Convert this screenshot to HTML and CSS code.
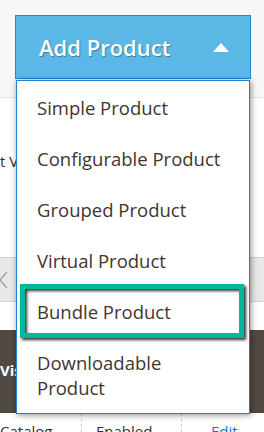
FILE: index.html
```html
<!DOCTYPE html>
<html>
<head>
<meta charset="utf-8">
<link rel="stylesheet" href="styles.css">
</head>
<body>
<div class="page">
  <div class="top-area"></div>
  <div class="label-row"><span class="label-text">t Visibility</span></div>
  <div class="pager-row">
    <svg class="chev" width="10" height="20" viewBox="0 0 10 20"><polyline points="8,2 1,10 8,18" fill="none" stroke="#a8a8a8" stroke-width="1.6"/></svg>
  </div>
  <div class="spacer-row"></div>
  <div class="head-row"><span class="head-text">Visibility</span></div>
  <div class="data-row">
    <div class="cell c1">Catalog</div>
    <div class="cell c2">Enabled</div>
    <div class="cell c3"><span class="edit">Edit</span></div>
  </div>
</div>

<div class="actions">
  <button class="add-btn"><span class="add-label">Add Product</span><span class="tri"></span></button>
  <ul class="menu">
    <li class="item">Simple Product</li>
    <li class="item">Configurable Product</li>
    <li class="item">Grouped Product</li>
    <li class="item">Virtual Product</li>
    <li class="item selected">Bundle Product<span class="highlight"></span></li>
    <li class="item">Downloadable Product</li>
  </ul>
</div>
</body>
</html>
```
FILE: styles.css
```css
* { box-sizing: border-box; }
html, body { margin: 0; padding: 0; }
body {
  width: 264px;
  height: 432px;
  overflow: hidden;
  font-family: "Open Sans", "DejaVu Sans", sans-serif;
  background: #ffffff;
  position: relative;
}
.page { display: flex; flex-direction: column; width: 264px; }
.top-area { height: 98px; background: #f8f8f8; border-bottom: 1px solid #e3e3e3; }
.label-row { height: 159px; background: #fff; padding-top: 53px; }
.label-text { font-size: 15px; color: #303030; white-space: nowrap; line-height: 20px; display: block; }
.pager-row { height: 45px; background: #e8e8e8; border-top: 1px solid #cfcfcf; border-bottom: 1px solid #cfcfcf; display: flex; align-items: center; }
.chev { display: block; margin-left: -1px; }
.spacer-row { height: 28px; background: #fff; }
.head-row { height: 83px; background: #514943; padding-top: 30px; }
.head-text { color: #fff; font-weight: 700; font-size: 15px; line-height: 20px; display: block; white-space: nowrap; }
.data-row { height: 19px; display: flex; background: #fff; }
.cell { font-size: 15px; color: #303030; padding-top: 8px; line-height: 20px; white-space: nowrap; }
.c1 { width: 82px; border-right: 1px dashed #d0d0d0; }
.c2 { width: 100px; border-right: 1px dashed #d0d0d0; padding-left: 14px; }
.c3 { padding-left: 29px; }
.edit { color: #007bdb; }

.actions { position: absolute; left: 15px; top: 15px; width: 236px; }
.add-btn {
  display: flex; align-items: center; justify-content: space-between;
  width: 236px; height: 64px; margin: 0;
  background: #5bb8e6; border: 1px solid #2487d8;
  padding: 0 21px 0 23px;
  font-family: "Open Sans", sans-serif; font-weight: 600; font-size: 22px;
  color: #fff; text-shadow: 1px 1px 1px rgba(0,0,0,.35);
}
.add-label { line-height: 30px; }
.tri {
  width: 0; height: 0;
  border-left: 8px solid transparent; border-right: 8px solid transparent;
  border-bottom: 9px solid #fff;
  margin-top: 1px;
}
.menu {
  list-style: none; margin: 1px 0 0 1px; padding: 1px 0 0 0;
  width: 234px;
  background: #fff;
  border: 1px solid #1f7fd0;
  box-shadow: 1px 1px 6px rgba(0,0,0,.45);
}
.item {
  position: relative;
  padding: 13px 20px 13px 20px;
  font-size: 18.5px; line-height: 25px; color: #41362f;
}
.highlight {
  position: absolute; left: 3px; right: 5px; top: -2px; bottom: -1px;
  border: 5px solid #00b89b;
  filter: drop-shadow(2px 2px 1.5px rgba(0,0,0,.8));
}
```
